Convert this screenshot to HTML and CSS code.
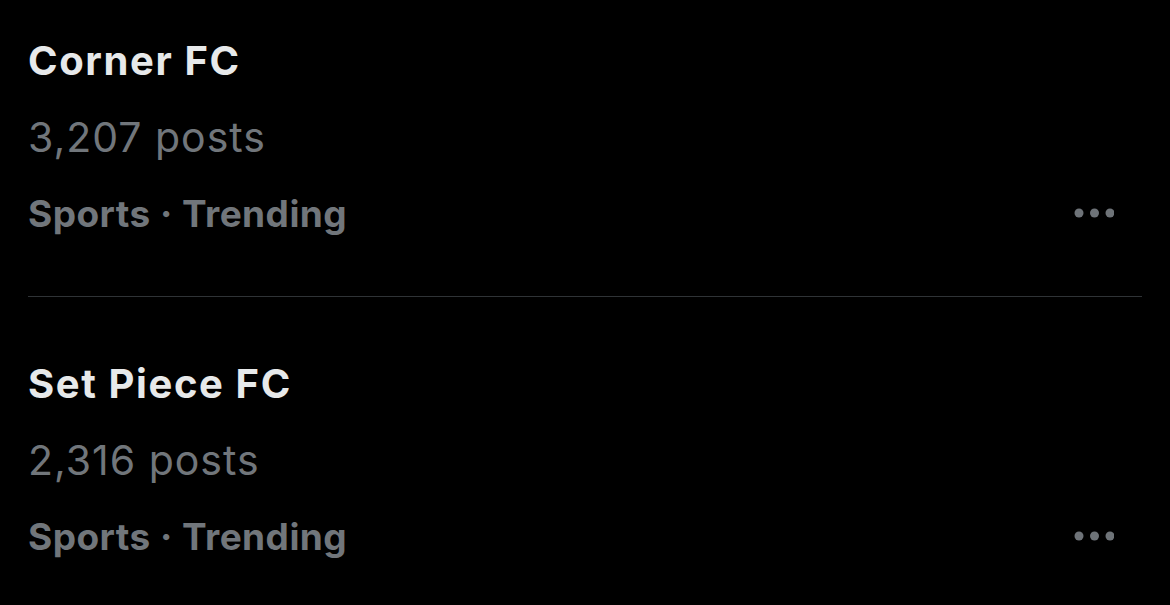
FILE: index.html
```html
<!DOCTYPE html>
<html>
<head>
<meta charset="utf-8">
<link rel="stylesheet" href="styles.css">
</head>
<body>
<div class="list">
  <div class="trend first">
    <div class="title">Corner FC</div>
    <div class="count">3,207 posts</div>
    <div class="meta-row">
      <span class="meta">Sports · Trending</span>
      <span class="more" aria-label="More">
        <svg width="40" height="10" viewBox="0 0 40 10"><circle cx="5" cy="5" r="4.5"/><circle cx="20.5" cy="5" r="4.5"/><circle cx="36" cy="5" r="4.5"/></svg>
      </span>
    </div>
  </div>
  <div class="trend second">
    <div class="title">Set Piece FC</div>
    <div class="count">2,316 posts</div>
    <div class="meta-row">
      <span class="meta">Sports · Trending</span>
      <span class="more" aria-label="More">
        <svg width="40" height="10" viewBox="0 0 40 10"><circle cx="5" cy="5" r="4.5"/><circle cx="20.5" cy="5" r="4.5"/><circle cx="36" cy="5" r="4.5"/></svg>
      </span>
    </div>
  </div>
</div>
</body>
</html>
```
FILE: styles.css
```css
html, body {
  margin: 0;
  padding: 0;
  background: #000;
}
body {
  width: 1170px;
  height: 605px;
  overflow: hidden;
  font-family: Inter, "Liberation Sans", sans-serif;
}
.list {
  padding: 0 28px 0 28px;
}
.trend {
  display: flex;
  flex-direction: column;
}
.trend.first {
  padding-top: 22px;
  padding-bottom: 45px;
  border-bottom: 1px solid #2f3336;
}
.trend.second {
  padding-top: 48px;
}
.title {
  font-size: 40px;
  font-weight: 700;
  line-height: 77px;
  color: #e7e9ea;
  letter-spacing: 1.6px;
}
.count {
  font-size: 41px;
  font-weight: 400;
  line-height: 76px;
  color: #71767b;
  letter-spacing: 1px;
}
.meta-row {
  display: flex;
  justify-content: space-between;
  align-items: center;
  height: 76px;
}
.meta {
  font-size: 37px;
  font-weight: 700;
  color: #71767b;
  letter-spacing: 0.45px;
}
.more {
  display: flex;
  margin-right: 28px;
  fill: #6e7378;
}
```
